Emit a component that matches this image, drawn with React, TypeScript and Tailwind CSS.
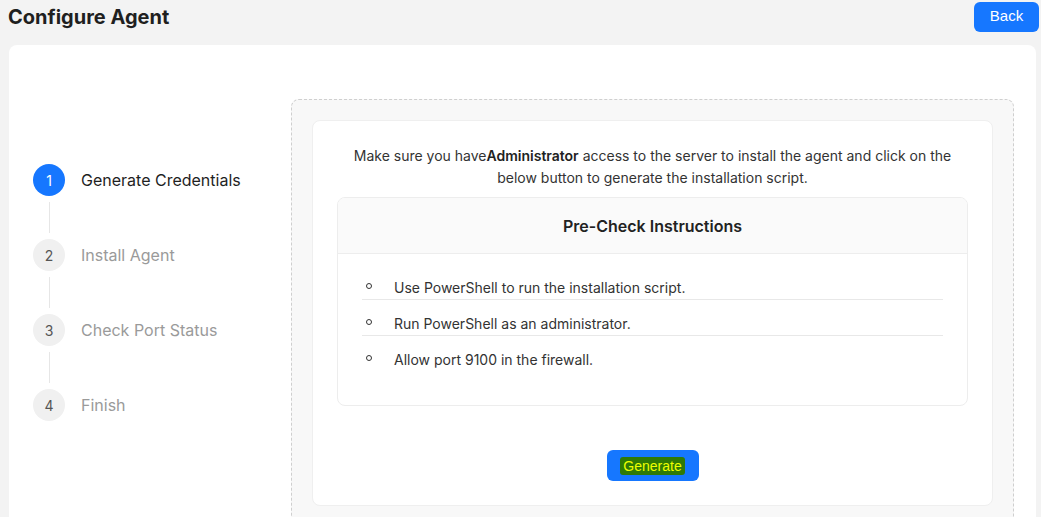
import React from "react";

const steps = ["Generate Credentials", "Install Agent", "Check Port Status", "Finish"];
const items = [
  "Use PowerShell to run the installation script.",
  "Run PowerShell as an administrator.",
  "Allow port 9100 in the firewall.",
];

export default function App() {
  return (
    <div className="min-h-[517px] bg-[#f3f3f3] font-['Inter','Noto_Sans',sans-serif] text-[#222] overflow-hidden h-[517px]">
      <div className="flex items-center justify-between h-[32px] pl-[8px] pr-[2px] pt-[1px]">
        <h1 className="text-[20px] font-bold text-[#1f1f1f] leading-none">Configure Agent</h1>
        <button className="w-[65px] h-[30px] rounded-[6px] bg-[#1677ff] text-white text-[15px] font-['Liberation_Sans',Arial,sans-serif]">
          Back
        </button>
      </div>
      <div className="mt-[13px] ml-[9px] mr-[5px] bg-white rounded-[8px] pt-[54px] pr-[22px] flex h-[600px]">
        <div className="w-[282px] shrink-0 pl-[24px] pt-[65px]">
          {steps.map((s, i) => (
            <div key={s}>
              <div className="flex items-center">
                <div
                  className={
                    i === 0
                      ? "w-[32px] h-[32px] rounded-full bg-[#1677ff] text-white flex items-center justify-center text-[14px]"
                      : "w-[32px] h-[32px] rounded-full bg-[#f0f0f0] text-[#555] flex items-center justify-center text-[14px]"
                  }
                >
                  {i + 1}
                </div>
                <div className={i === 0 ? "ml-[16px] text-[16px] text-[#1f1f1f]" : "ml-[16px] text-[16px] text-[#9a9a9a]"}>
                  {s}
                </div>
              </div>
              {i < steps.length - 1 && (
                <div className="w-[32px] flex justify-center py-[6px]">
                  <div className="w-px h-[31px] bg-[#e6e6e6]" />
                </div>
              )}
            </div>
          ))}
        </div>
        <div className="flex-1 border border-dashed border-[#cfcfcf] rounded-[8px] bg-[#f8f8f8] p-[20px] self-start">
          <div className="bg-white border border-[#efefef] rounded-[8px] px-[24px] pt-[24px] pb-[24px]">
            <p className="text-center text-[14px] leading-[22px] text-[#333] px-[10px]">
              Make sure you have<b className="font-semibold text-[#222]">Administrator</b> access to the server to install the agent and click on the below button to generate the installation script.
            </p>
            <div className="mt-[8px] border border-[#ededed] rounded-[8px] overflow-hidden">
              <div className="h-[56px] bg-[#fafafa] border-b border-[#ededed] flex items-center justify-center text-[16px] font-semibold text-[#222]">
                Pre-Check Instructions
              </div>
              <ul className="px-[24px] pt-[10px] pb-[34px]">
                {items.map((t, i) => (
                  <li
                    key={t}
                    className={
                      i < items.length - 1
                        ? "flex items-center pt-[13px] pb-[1px] leading-[21px] text-[14px] text-[#333] border-b border-[#e8e8e8]"
                        : "flex items-center pt-[13px] pb-[1px] leading-[21px] text-[14px] text-[#333]"
                    }
                  >
                    <span className="ml-[4px] w-[6px] h-[6px] rounded-full border-[1.5px] border-[#333] -mt-[3px]" />
                    <span className="ml-[22px]">{t}</span>
                  </li>
                ))}
              </ul>
            </div>
            <div className="flex justify-center mt-[44px]">
              <button className="w-[92px] h-[31px] rounded-[6px] bg-[#1677ff] flex items-center justify-center font-['Liberation_Sans',Arial,sans-serif] text-[14px]">
                <span className="bg-[#2f7a05] text-[#eeff00] px-[3px] leading-[18px] rounded-[3px]">Generate</span>
              </button>
            </div>
          </div>
        </div>
      </div>
    </div>
  );
}
